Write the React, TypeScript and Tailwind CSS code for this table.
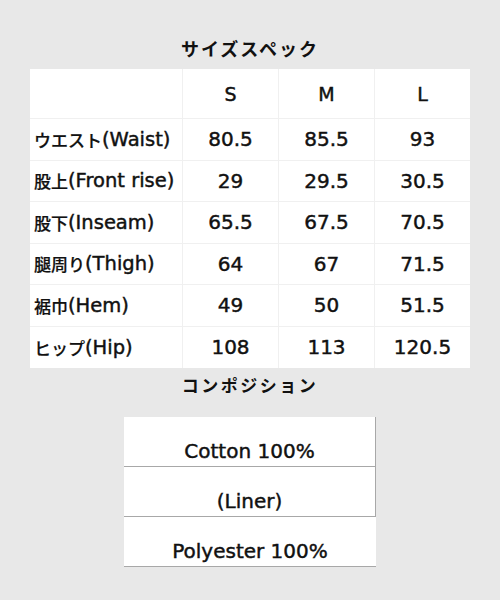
import React from 'react';

const sizes = ['S', 'M', 'L'];

const rows: { jp: string; en: string; values: string[] }[] = [
  { jp: 'ウエスト', en: '(Waist)', values: ['80.5', '85.5', '93'] },
  { jp: '股上', en: '(Front rise)', values: ['29', '29.5', '30.5'] },
  { jp: '股下', en: '(Inseam)', values: ['65.5', '67.5', '70.5'] },
  { jp: '腿周り', en: '(Thigh)', values: ['64', '67', '71.5'] },
  { jp: '裾巾', en: '(Hem)', values: ['49', '50', '51.5'] },
  { jp: 'ヒップ', en: '(Hip)', values: ['108', '113', '120.5'] },
];

const composition = ['Cotton 100%', '(Liner)', 'Polyester 100%'];

const latin = { fontFamily: '"DejaVu Sans", "Noto Sans CJK JP", sans-serif' };
const jpFont = { fontFamily: '"Noto Sans CJK JP", sans-serif' };

const App: React.FC = () => {
  return (
    <div className="w-[500px] h-[600px] bg-[#e8e8e8] text-[#111] [-webkit-text-stroke:0.45px_#111]" style={latin}>
      <div className="pt-[36px] h-[69px] text-center text-[18px] font-bold tracking-[2px] leading-[24px] [-webkit-text-stroke:0px]" style={jpFont}>
        サイズスペック
      </div>

      {/* size table */}
      <div className="mx-[30px] bg-white">
        <div className="grid grid-cols-[153px_96px_96px_95px] h-[50px] border-b border-[#f0f0f0]">
          <div className="border-r border-[#f0f0f0]" />
          {sizes.map((s, i) => (
            <div
              key={s}
              className={`flex items-center justify-center pt-[2px] text-[19px] ${i < 2 ? 'border-r border-[#f0f0f0]' : ''}`}
            >
              {s}
            </div>
          ))}
        </div>
        {rows.map((row, r) => (
          <div
            key={row.en}
            className={`grid grid-cols-[153px_96px_96px_95px] h-[41.5px] ${r < rows.length - 1 ? 'border-b border-[#f0f0f0]' : ''}`}
          >
            <div className="flex items-center pl-[4px] border-r border-[#f0f0f0] whitespace-nowrap">
              <span className="text-[17px] font-medium [-webkit-text-stroke:0.2px_#111]" style={jpFont}>{row.jp}</span>
              <span className="text-[19.5px]">{row.en}</span>
            </div>
            {row.values.map((v, i) => (
              <div
                key={i}
                className={`flex items-center justify-center text-[20px] ${i < 2 ? 'border-r border-[#f0f0f0]' : ''}`}
              >
                {v}
              </div>
            ))}
          </div>
        ))}
      </div>

      <div className="pt-[5px] h-[49px] text-center text-[17px] font-bold tracking-[2.5px] leading-[24px] [-webkit-text-stroke:0px]" style={jpFont}>
        コンポジション
      </div>

      {/* composition */}
      <div className="mx-auto w-[252px] bg-white">
        {composition.map((c, i) => (
          <div
            key={c}
            className={`h-[50px] flex items-end justify-center pb-[5px] leading-[20px] text-[20px] border-b border-[#a8a8a8] ${i < 2 ? 'border-r' : ''}`}
          >
            {c}
          </div>
        ))}
      </div>
    </div>
  );
};

export default App;
